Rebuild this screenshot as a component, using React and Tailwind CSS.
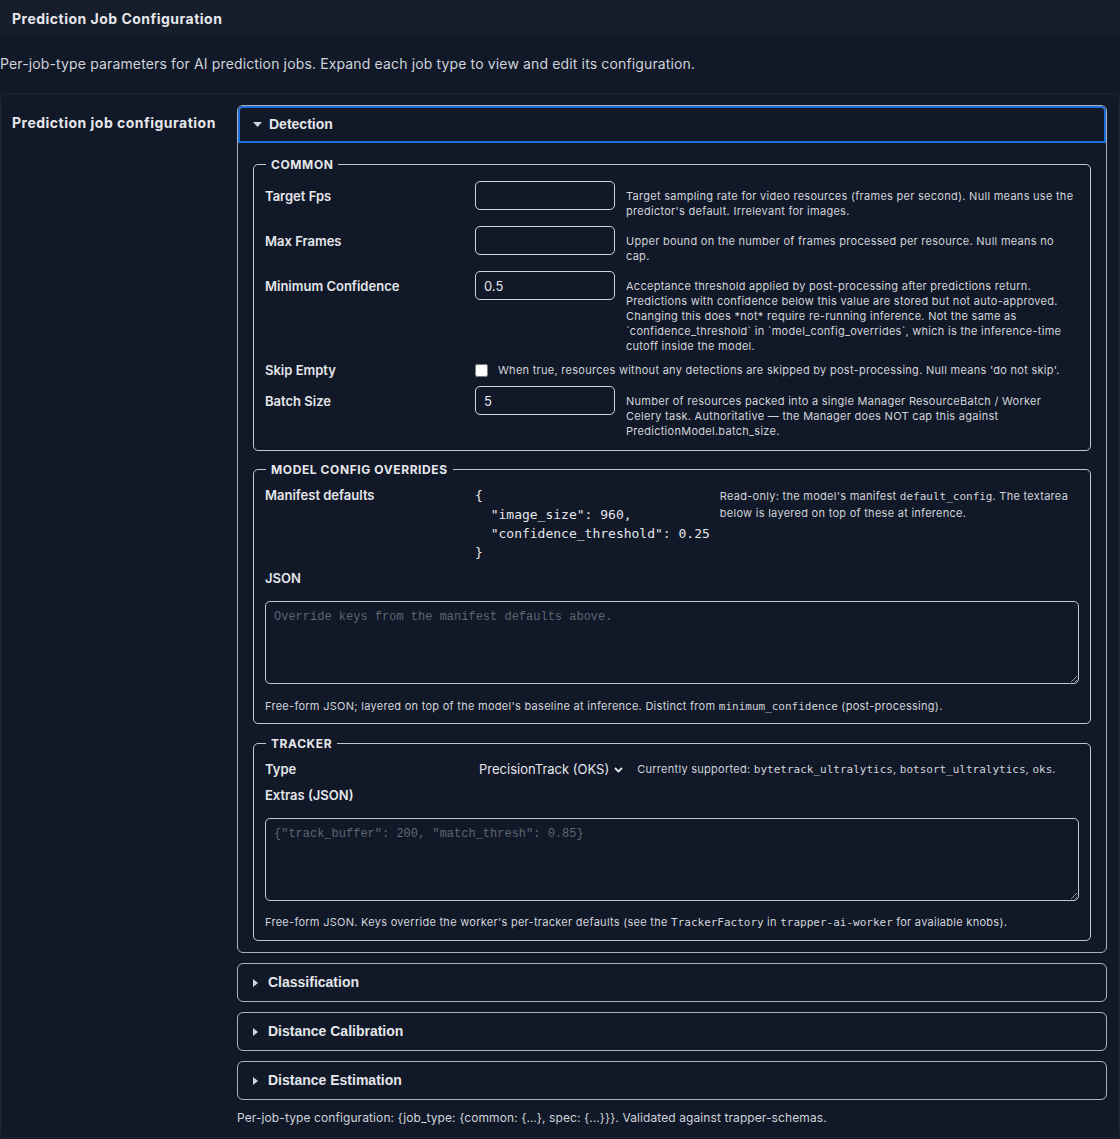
import { useState } from 'react'

const mono = "font-[family-name:'DejaVu_Sans_Mono',monospace]"
const codeFont = "font-[family-name:'Liberation_Mono',monospace]"
const summaryFont = "font-[family-name:'Liberation_Sans',Arial,sans-serif]"
const help = 'text-[11px] leading-[15px] tracking-[0.025em] text-[#d1d5db]'

const commonFields = [
  {
    label: 'Target Fps',
    value: '',
    help: "Target sampling rate for video resources (frames per second). Null means use the predictor's default. Irrelevant for images.",
  },
  {
    label: 'Max Frames',
    value: '',
    help: 'Upper bound on the number of frames processed per resource. Null means no cap.',
  },
  {
    label: 'Minimum Confidence',
    value: '0.5',
    help: "Acceptance threshold applied by post-processing after predictions return. Predictions with confidence below this value are stored but not auto-approved. Changing this does *not* require re-running inference. Not the same as `confidence_threshold` in `model_config_overrides`, which is the inference-time cutoff inside the model.",
  },
]

const closedTypes = ['Classification', 'Distance Calibration', 'Distance Estimation']

function CaretDown() {
  return (
    <svg width="9" height="5" viewBox="0 0 9 5" className="shrink-0">
      <polygon points="0,0 9,0 4.5,5" fill="#d1d5db" />
    </svg>
  )
}

function CaretRight() {
  return (
    <svg width="5" height="8" viewBox="0 0 5 8" className="shrink-0">
      <polygon points="0,0 5,4 0,8" fill="#d1d5db" />
    </svg>
  )
}

function Fieldset({ title, className = 'pb-[11px]', children }) {
  return (
    <fieldset className={`rounded-[5px] border border-[#c4c8ce] px-[11px] ${className}`}>
      <legend className="ml-[1px] px-[5px] text-[12px] font-bold uppercase leading-[15px] tracking-[0.05em] text-[#e5e7eb]">
        {title}
      </legend>
      <div className="pt-[9px]">{children}</div>
    </fieldset>
  )
}

function TextInput({ value }) {
  const [v, setV] = useState(value)
  return (
    <input
      value={v}
      onChange={(e) => setV(e.target.value)}
      className="h-[29px] w-[140px] shrink-0 rounded-[5px] border border-[#d1d5db] bg-transparent px-[8px] text-[13px] text-[#e5e7eb] outline-none"
    />
  )
}

function Code({ children }) {
  return <code className={`${mono} text-[11px] tracking-normal`}>{children}</code>
}

function CommonSection() {
  return (
    <Fieldset title="Common">
      <div className="flex flex-col gap-[7px]">
        {commonFields.map((f) => (
          <div key={f.label} className="flex items-start">
            <div className="w-[210px] shrink-0 pt-[7px] text-[13px] font-semibold leading-[17px]">{f.label}</div>
            <TextInput value={f.value} />
            <p className={`ml-[11px] pt-[8px] ${help}`}>{f.help}</p>
          </div>
        ))}
        <div className="flex items-center pt-[1px]">
          <div className="w-[210px] shrink-0 text-[13px] font-semibold leading-[17px]">Skip Empty</div>
          <input type="checkbox" className="m-0 h-[13px] w-[13px] shrink-0" />
          <p className={`ml-[10px] ${help}`}>
            When true, resources without any detections are skipped by post-processing. Null means 'do not skip'.
          </p>
        </div>
        <div className="flex items-start">
          <div className="w-[210px] shrink-0 pt-[7px] text-[13px] font-semibold leading-[17px]">Batch Size</div>
          <TextInput value="5" />
          <p className={`ml-[11px] pt-[8px] ${help}`}>
            Number of resources packed into a single Manager ResourceBatch / Worker Celery task. Authoritative — the
            Manager does NOT cap this against PredictionModel.batch_size.
          </p>
        </div>
      </div>
    </Fieldset>
  )
}

function OverridesSection() {
  return (
    <Fieldset title="Model config overrides" className="pb-[9px]">
      <div className="flex items-start">
        <div className="w-[210px] shrink-0 text-[13px] font-semibold leading-[19px]">Manifest defaults</div>
        <pre className={`${mono} shrink-0 text-[13px] leading-[19px] text-[#e5e7eb]`}>
          {'{\n  "image_size": 960,\n  "confidence_threshold": 0.25\n}'}
        </pre>
        <p className={`ml-[10px] pt-[2px] ${help} leading-[17px]`}>
          Read-only: the model's manifest <Code>default_config</Code>. The textarea below is layered on top of these at
          inference.
        </p>
      </div>
      <div className="mt-[7px] mb-[13px] text-[13px] font-semibold leading-[19px]">JSON</div>
      <textarea
        rows={4}
        placeholder="Override keys from the manifest defaults above."
        className={`${codeFont} block h-[83px] w-full rounded-[5px] border border-[#c4c8ce] bg-transparent px-[8px] pt-[7px] pb-[5px] text-[12px] leading-[16px] text-[#e5e7eb] outline-none placeholder:text-[#5f6672]`}
      />
      <p className={`mt-[15px] ${help}`}>
        Free-form JSON; layered on top of the model's baseline at inference. Distinct from{' '}
        <Code>minimum_confidence</Code> (post-processing).
      </p>
    </Fieldset>
  )
}

function TrackerSection() {
  return (
    <Fieldset title="Tracker" className="mt-[1px] pb-[10px]">
      <div className="flex items-center">
        <div className="w-[210px] shrink-0 text-[13px] font-semibold leading-[19px]">Type</div>
        <div className="flex shrink-0 items-center gap-[5px] pl-[4px] text-[13px] leading-[19px] text-[#e5e7eb]">
          <span>PrecisionTrack (OKS)</span>
          <svg width="9" height="6" viewBox="0 0 9 6" fill="none">
            <path d="M1 1l3.5 3.5L8 1" stroke="#e5e7eb" strokeWidth="1.8" />
          </svg>
        </div>
        <p className={`ml-[14px] ${help}`}>
          Currently supported: <Code>bytetrack_ultralytics</Code>, <Code>botsort_ultralytics</Code>,{' '}
          <Code>oks</Code>.
        </p>
      </div>
      <div className="mt-[7px] mb-[13px] text-[13px] font-semibold leading-[19px]">Extras (JSON)</div>
      <textarea
        rows={4}
        placeholder='{"track_buffer": 200, "match_thresh": 0.85}'
        className={`${codeFont} block h-[83px] w-full rounded-[5px] border border-[#c4c8ce] bg-transparent px-[8px] pt-[7px] pb-[5px] text-[12px] leading-[16px] text-[#e5e7eb] outline-none placeholder:text-[#5f6672]`}
      />
      <p className={`mt-[14px] ${help}`}>
        Free-form JSON. Keys override the worker's per-tracker defaults (see the <Code>TrackerFactory</Code> in{' '}
        <Code>trapper-ai-worker</Code> for available knobs).
      </p>
    </Fieldset>
  )
}

export default function App() {
  return (
    <div className="min-h-screen bg-[#111827] font-[family-name:Inter,sans-serif] text-[#e5e7eb]">
      <div className="flex h-[37px] items-center rounded-b-[6px] bg-[#161d2b] px-[12px] text-[14px] font-bold tracking-[0.035em]">
        Prediction Job Configuration
      </div>

      <p className="mt-[17px] text-[14px] leading-[20px] tracking-[0.01em] text-[#cfd3da]">
        Per-job-type parameters for AI prediction jobs. Expand each job type to view and edit its configuration.
      </p>

      <div className="mt-[19px] flex gap-[12px] rounded-[6px] border border-[#1f2735] p-[11px] pr-[12px]">
        <div className="w-[213px] shrink-0 pt-[8px] text-[14px] font-bold leading-[20px] tracking-[0.035em]">
          Prediction job configuration
        </div>

        <div className="flex min-w-0 flex-1 flex-col gap-[10px]">
          <details open className="rounded-[6px] border border-[#aeb3bb]">
            <summary
              className={`${summaryFont} flex h-[37px] cursor-pointer list-none items-center gap-[7px] rounded-t-[5px] border-2 border-[#1a6ed8] pl-[13px] text-[14px] font-bold [&::-webkit-details-marker]:hidden`}
            >
              <CaretDown />
              Detection
            </summary>
            <div className="flex flex-col gap-[11px] px-[15px] pt-[14px] pb-[11px]">
              <CommonSection />
              <OverridesSection />
              <TrackerSection />
            </div>
          </details>

          {closedTypes.map((name) => (
            <details key={name} className="rounded-[6px] border border-[#aeb3bb]">
              <summary
                className={`${summaryFont} flex h-[37px] cursor-pointer list-none items-center gap-[10px] pl-[15px] text-[14px] font-bold [&::-webkit-details-marker]:hidden`}
              >
                <CaretRight />
                {name}
              </summary>
            </details>
          ))}

          <p className="text-[12px] leading-[16px] tracking-[0.008em] text-[#cfd3da]">
            Per-job-type configuration: {'{'}job_type: {'{'}common: {'{…}'}, spec: {'{…}'}{'}}'}. Validated against
            trapper-schemas.
          </p>
        </div>
      </div>
    </div>
  )
}
